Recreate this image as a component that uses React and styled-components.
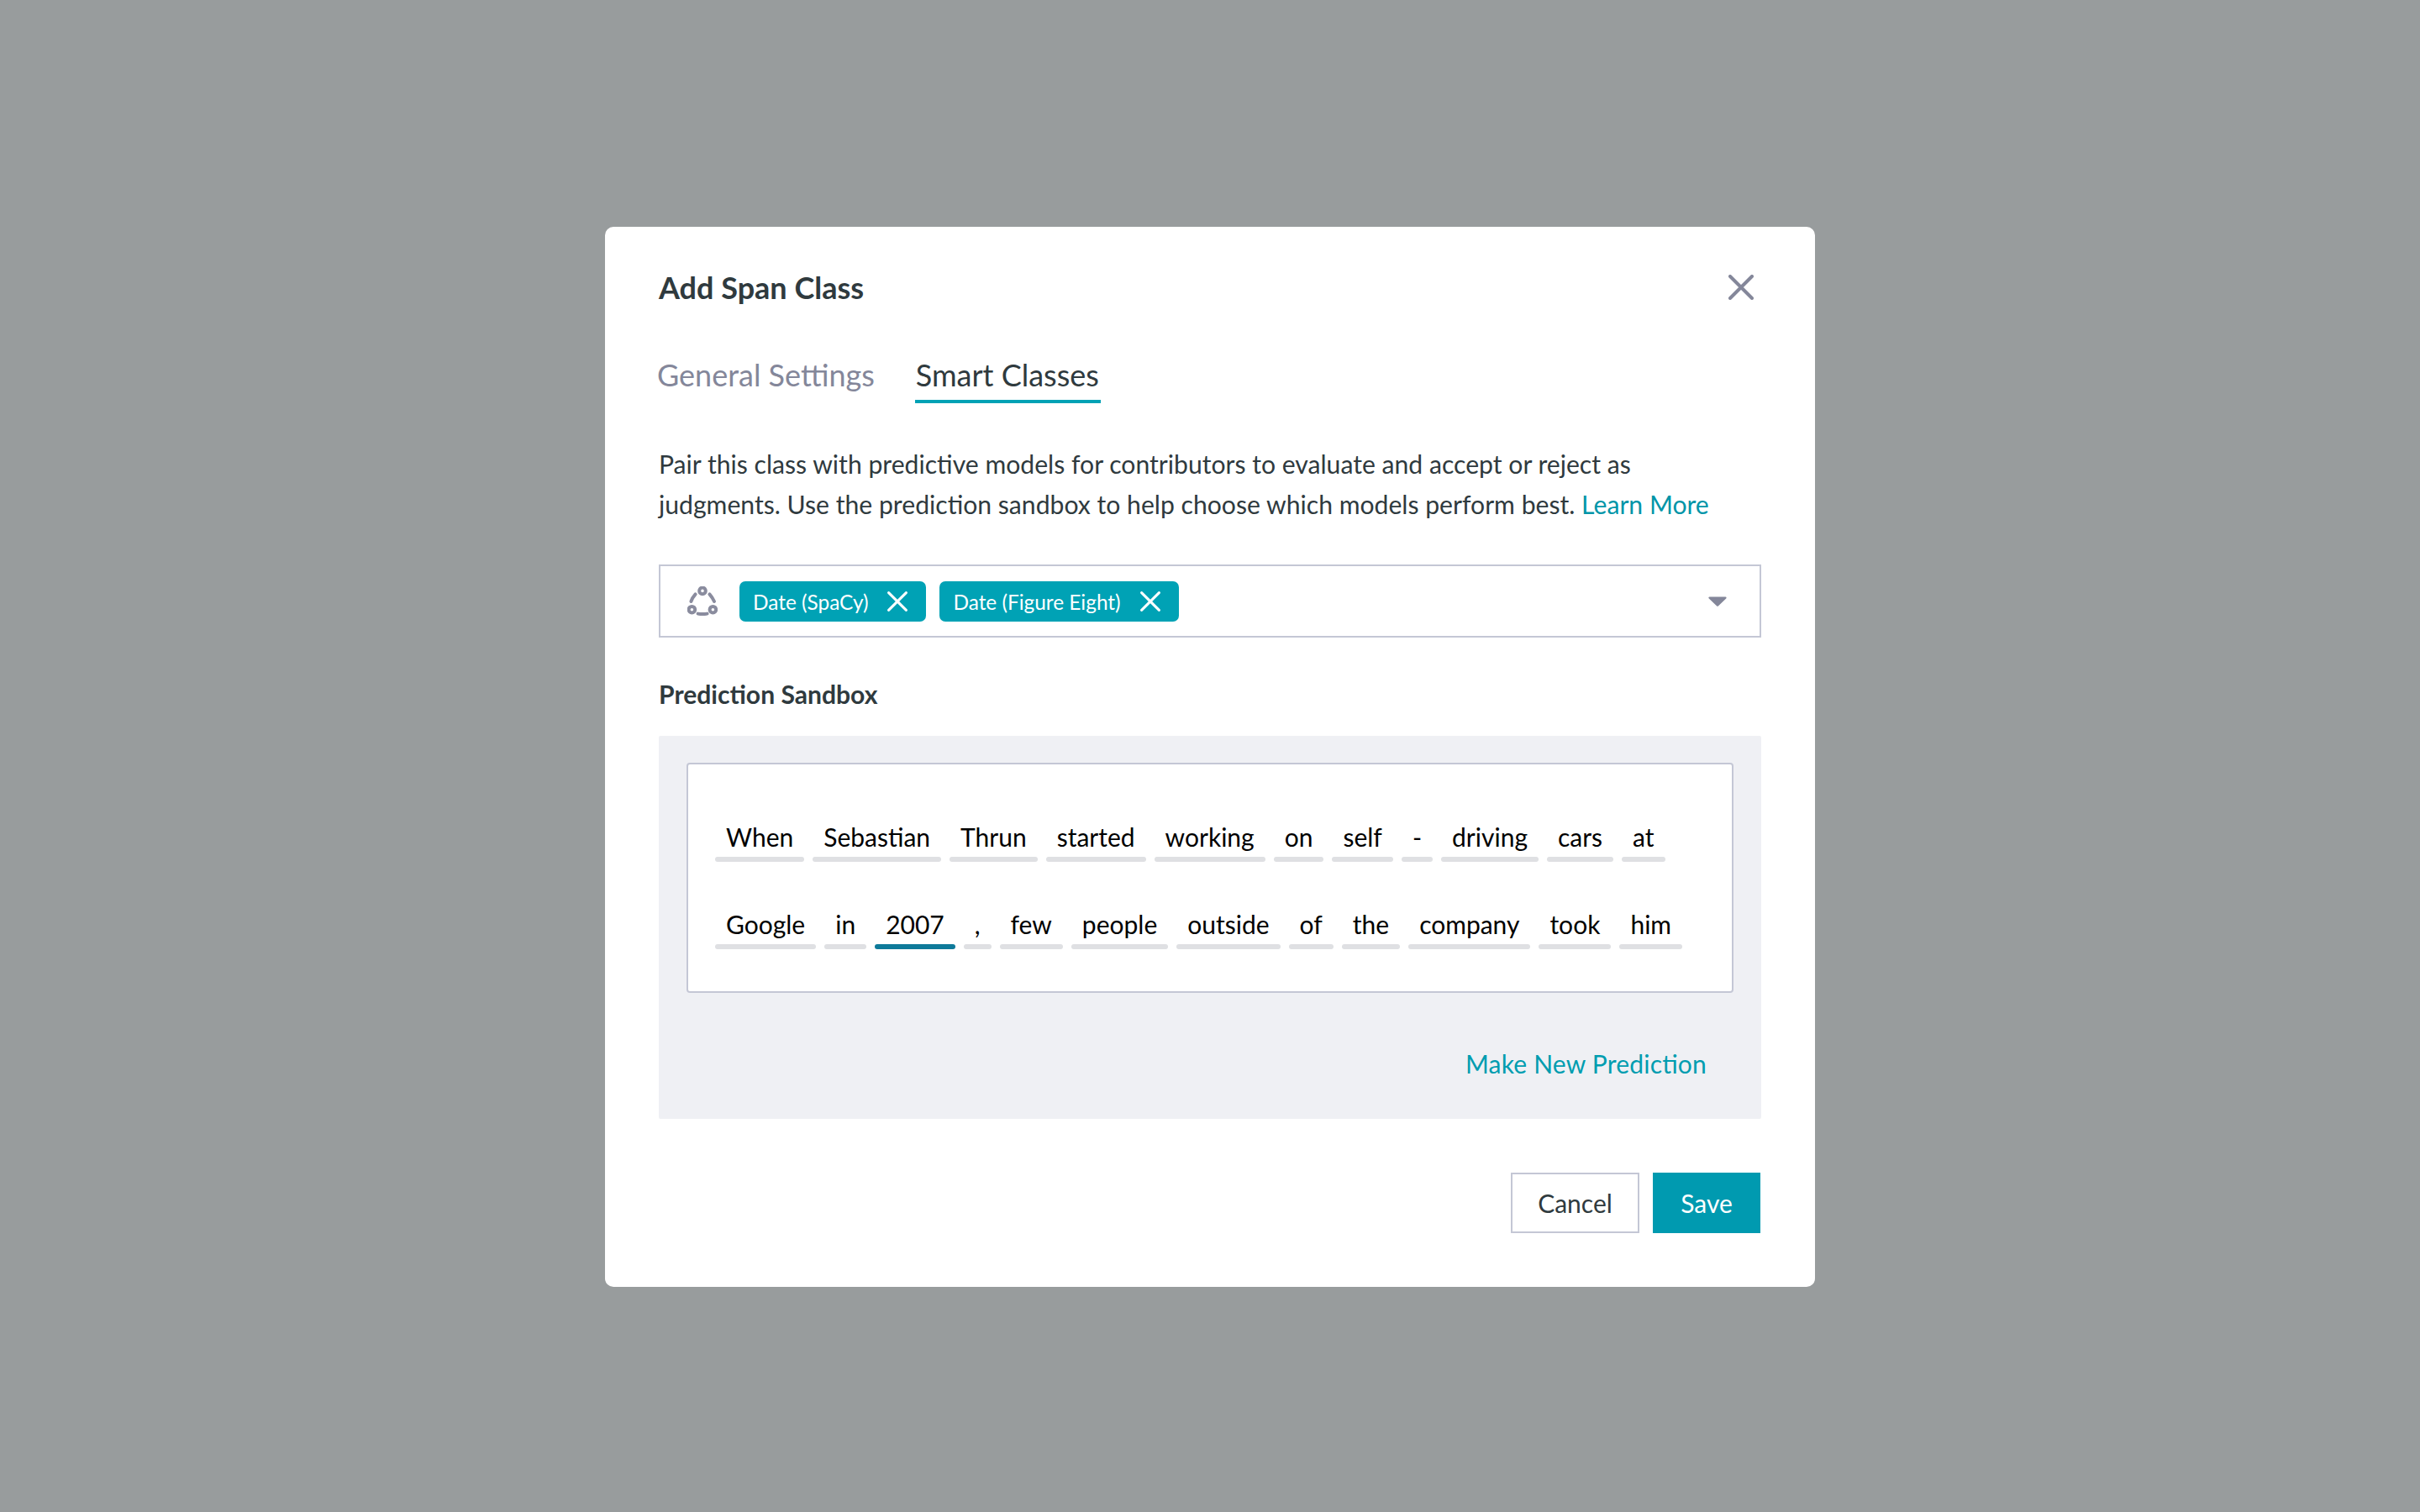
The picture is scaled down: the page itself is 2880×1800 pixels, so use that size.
import React from "react";
import styled, { createGlobalStyle } from "styled-components";

const GlobalStyle = createGlobalStyle`
  html, body {
    margin: 0;
    padding: 0;
    background: #989c9d;
  }
  body {
    font-family: Lato, "Open Sans", sans-serif;
    font-feature-settings: "liga" 1;
  }
`;

const rowOne = ["When", "Sebastian", "Thrun", "started", "working", "on", "self", "-", "driving", "cars", "at"];
const rowTwo = ["Google", "in", "2007", ",", "few", "people", "outside", "of", "the", "company", "took", "him"];

const CloseIcon = ({ size = 30, weight = 4 }) => (
  <svg width={size} height={size} viewBox="0 0 30 30" fill="none" stroke="currentColor" strokeWidth={weight} strokeLinecap="round">
    <path d="M2 2 L28 28 M28 2 L2 28" />
  </svg>
);

const ModelIcon = () => (
  <svg width="36" height="36" viewBox="0 0 36 36" fill="none" stroke="#8a8c9e" strokeWidth="4" strokeLinecap="round">
    <circle cx="18" cy="5.4" r="3.8" />
    <circle cx="5.4" cy="27.7" r="3.8" />
    <circle cx="30.4" cy="27.7" r="3.8" />
    <path d="M9.6 9.4 Q6 13.5 4.4 18" />
    <path d="M26.4 9.4 Q30 13.5 32 18" />
    <path d="M12.6 32.6 Q18 33.6 23.6 32.6" />
  </svg>
);

const CaretIcon = () => (
  <svg width="22" height="12" viewBox="0 0 22 12" fill="#84879a" stroke="#84879a" strokeWidth="2.4" strokeLinejoin="round">
    <path d="M1.6 1.6 H20.4 L11 10.6 Z" />
  </svg>
);

const Token = ({ word }) => (
  <TokenBox>
    <TokenText>{word}</TokenText>
    <TokenBar $active={word === "2007"} />
  </TokenBox>
);

export default function App() {
  return (
    <Page>
      <GlobalStyle />
      <Modal>
        <Header>
          <Title>Add Span Class</Title>
          <CloseButton>
            <CloseIcon />
          </CloseButton>
        </Header>
        <Tabs>
          <Tab>General Settings</Tab>
          <Tab $active>Smart Classes</Tab>
        </Tabs>
        <Description>
          Pair this class with predictive models for contributors to evaluate and accept or reject as
          <br />
          judgments. Use the prediction sandbox to help choose which models perform best. <LearnMore>Learn More</LearnMore>
        </Description>
        <Select>
          <ModelIcon />
          <Chip>
            <ChipLabel>Date (SpaCy)</ChipLabel>
            <CloseIcon size={24} weight={3.8} />
          </Chip>
          <Chip>
            <ChipLabel>Date (Figure Eight)</ChipLabel>
            <CloseIcon size={24} weight={3.8} />
          </Chip>
          <CaretSlot>
            <CaretIcon />
          </CaretSlot>
        </Select>
        <SectionLabel>Prediction Sandbox</SectionLabel>
        <Sandbox>
          <TokenCard>
            <TokenRow>
              {rowOne.map((w) => <Token key={w} word={w} />)}
            </TokenRow>
            <TokenRow>
              {rowTwo.map((w) => <Token key={w} word={w} />)}
            </TokenRow>
          </TokenCard>
          <PredictionLink>Make New Prediction</PredictionLink>
        </Sandbox>
        <Footer>
          <CancelButton>Cancel</CancelButton>
          <SaveButton>Save</SaveButton>
        </Footer>
      </Modal>
    </Page>
  );
}

const Page = styled.div`
  width: 100%;
  height: 1800px;
  display: flex;
  align-items: flex-start;
  justify-content: center;
  padding-top: 270px;
  box-sizing: border-box;
`;

const Modal = styled.div`
  width: 1440px;
  height: 1262px;
  box-sizing: border-box;
  padding: 48px 64px 64px;
  background: #ffffff;
  border-radius: 10px;
  display: flex;
  flex-direction: column;
  color: #2f3a3e;
`;

const Header = styled.div`
  display: flex;
  align-items: center;
  justify-content: space-between;
  height: 48px;
`;

const Title = styled.h1`
  margin: 0;
  font-size: 36px;
  line-height: 48px;
  font-weight: 700;
  color: #2f3a3e;
`;

const CloseButton = styled.div`
  display: flex;
  margin-right: 9px;
  color: #84879a;
`;

const Tabs = styled.div`
  display: flex;
  gap: 48px;
  margin: 56px 0 0 -2px;
`;

const Tab = styled.div`
  font-size: 36px;
  line-height: 48px;
  padding: 0 ${(p) => (p.$active ? "2px" : "0")} 6px ${(p) => (p.$active ? "1px" : "0")};
  color: ${(p) => (p.$active ? "#2f3a3e" : "#84879a")};
  border-bottom: 4px solid ${(p) => (p.$active ? "#00a2b5" : "transparent")};
`;

const Description = styled.p`
  margin: 48px 0 0;
  font-size: 30.15px;
  line-height: 48px;
  color: #2f3a3e;
  white-space: nowrap;
`;

const LearnMore = styled.span`
  color: #0095a8;
`;

const Select = styled.div`
  position: relative;
  margin-top: 48px;
  height: 87px;
  box-sizing: border-box;
  border: 2px solid #c4c7d5;
  padding-left: 32px;
  display: flex;
  align-items: center;
  gap: 16px;
  & > svg {
    margin-right: 10px;
  }
`;

const Chip = styled.div`
  height: 48px;
  box-sizing: border-box;
  padding: 0 22px 0 16px;
  display: flex;
  align-items: center;
  gap: 23px;
  border-radius: 7px;
  background: #00a2b5;
  color: #ffffff;
  font-size: 24.4px;
`;

const ChipLabel = styled.span`
  padding-top: 2px;
`;

const CaretSlot = styled.div`
  position: absolute;
  right: 39px;
  top: 36px;
  display: flex;
`;

const SectionLabel = styled.div`
  margin-top: 43px;
  font-size: 30.1px;
  line-height: 48px;
  font-weight: 700;
  color: #2f3a3e;
`;

const Sandbox = styled.div`
  margin-top: 26px;
  height: 456px;
  box-sizing: border-box;
  padding: 32px 33px 40px;
  background: #eff0f4;
  border-radius: 2px;
  display: flex;
  flex-direction: column;
`;

const TokenCard = styled.div`
  height: 274px;
  box-sizing: border-box;
  border: 2px solid #c4c7d5;
  border-radius: 4px;
  background: #ffffff;
  padding: 66px 32px 0 32px;
  display: flex;
  flex-direction: column;
  gap: 54px;
`;

const TokenRow = styled.div`
  display: flex;
  gap: 10px;
`;

const TokenBox = styled.div`
  display: flex;
  flex-direction: column;
  gap: 4px;
`;

const TokenText = styled.span`
  padding: 0 13px;
  font-size: 30px;
  line-height: 40px;
  color: #000000;
  text-align: center;
`;

const TokenBar = styled.div`
  height: 6px;
  border-radius: 3px;
  background: ${(p) => (p.$active ? "#0e7a9a" : "#dfe0e3")};
`;

const PredictionLink = styled.div`
  margin-top: 60px;
  padding-right: 32px;
  text-align: right;
  font-size: 30px;
  letter-spacing: 0.2px;
  line-height: 48px;
  color: #009db0;
`;

const Footer = styled.div`
  margin-top: 64px;
  padding-right: 1px;
  display: flex;
  justify-content: flex-end;
  gap: 16px;
`;

const CancelButton = styled.div`
  width: 153px;
  height: 72px;
  box-sizing: border-box;
  display: flex;
  align-items: center;
  justify-content: center;
  border: 2px solid #c4c7d5;
  font-size: 30px;
  color: #2f3a3e;
`;

const SaveButton = styled.div`
  width: 128px;
  height: 72px;
  display: flex;
  align-items: center;
  justify-content: center;
  background: #009ab0;
  font-size: 30px;
  color: #ffffff;
`;
